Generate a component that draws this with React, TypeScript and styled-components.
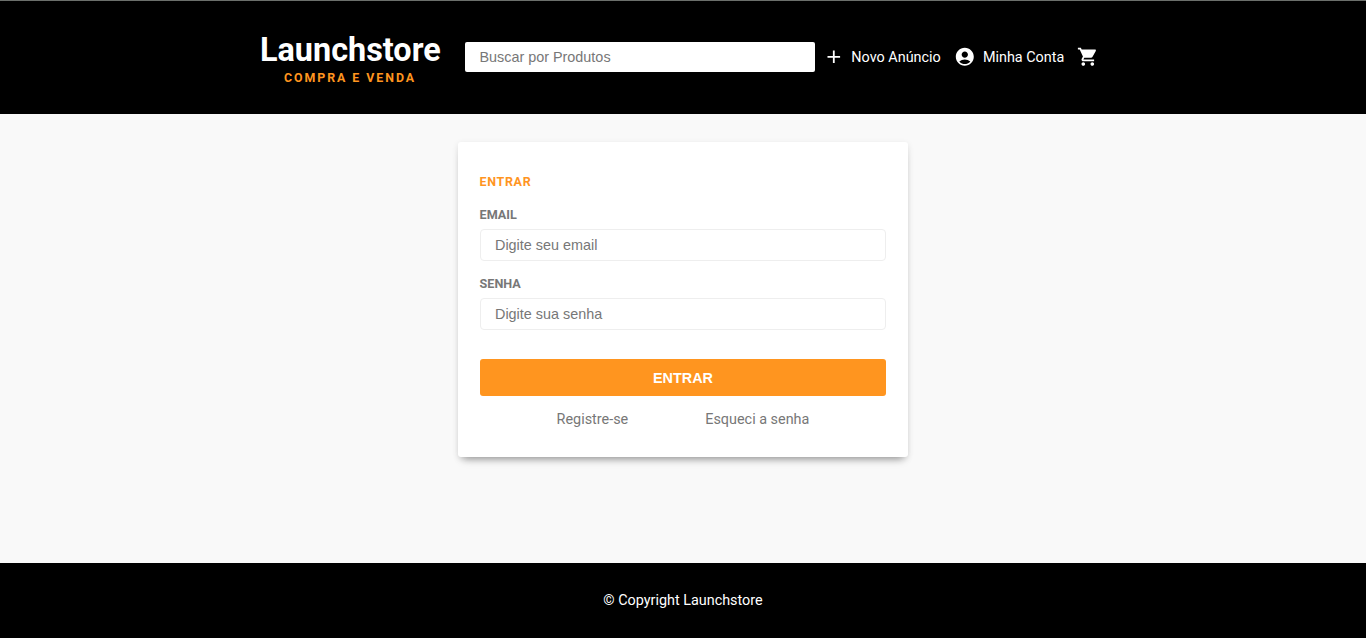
import React from 'react';
import styled, { createGlobalStyle } from 'styled-components';
import { MdAdd, MdAccountCircle, MdShoppingCart } from 'react-icons/md';

const GlobalStyle = createGlobalStyle`
  * { margin: 0; padding: 0; box-sizing: border-box; }
  body { font-family: Roboto, sans-serif; font-size: 14.4px; background: #f9f9f9; }
  a { color: inherit; text-decoration: none; }
`;

const Page = styled.div`
  min-height: 100vh;
  display: flex;
  flex-direction: column;
`;

const Header = styled.header`
  height: 114px;
  background: #000;
  box-shadow: inset 0 1px #6b6f6b;
  color: #fff;
  display: flex;
  justify-content: center;
`;

const Bar = styled.div`
  width: 846px;
  display: flex;
  align-items: center;
`;

const Logo = styled.a`
  width: 180px;
  margin-right: 25px;
  padding-top: 2px;
  text-align: center;
`;

const LogoName = styled.h1`
  font-size: 32.4px;
  line-height: 39px;
  font-weight: 700;
`;

const LogoTag = styled.span`
  display: block;
  color: #ff951f;
  font-size: 12.4px;
  line-height: 16px;
  font-weight: 700;
  letter-spacing: 1.94px;
`;

const Search = styled.input`
  width: 350px;
  height: 30px;
  border: 0;
  border-radius: 2px;
  padding: 0 14.4px;
  font: 14.4px 'Liberation Sans', sans-serif;
  &::placeholder { color: #777; }
`;

const NavLink = styled.a<{ $left: number }>`
  display: flex;
  align-items: center;
  gap: 7.2px;
  margin-left: ${(p) => p.$left}px;
  white-space: nowrap;
`;

const Main = styled.main`
  flex: 1;
  padding-top: 28px;
`;

const Card = styled.form`
  width: 450px;
  height: 315px;
  margin: 0 auto;
  padding: 32px 21.6px 0;
  background: #fff;
  border-radius: 3px;
  box-shadow: 0 7px 8px -5px rgba(0, 0, 0, 0.35), 0 2px 6px rgba(0, 0, 0, 0.11);
`;

const Title = styled.h2`
  color: #ff951f;
  font-size: 12.5px;
  line-height: 15px;
  letter-spacing: 0.65px;
  margin-bottom: 18px;
`;

const Field = styled.label`
  display: block;
  color: #777;
  font-size: 12.6px;
  line-height: 15px;
  font-weight: 700;
  margin-bottom: 15px;
`;

const Input = styled.input`
  display: block;
  width: 100%;
  height: 32px;
  margin-top: 7px;
  padding: 0 14.4px;
  border: 1px solid #eee;
  border-radius: 4px;
  font: 14.4px 'Liberation Sans', sans-serif;
  &::placeholder { color: #777; }
`;

const Submit = styled.button`
  width: 100%;
  height: 37px;
  margin-top: 14px;
  border: 0;
  border-radius: 3px;
  background: #ff951f;
  color: #fff;
  font: bold 14.4px 'Liberation Sans', sans-serif;
`;

const Links = styled.nav`
  display: flex;
  justify-content: space-evenly;
  margin-top: 15px;
  color: #777;
  line-height: 17px;
`;

const Footer = styled.footer`
  height: 75px;
  display: flex;
  align-items: center;
  justify-content: center;
  background: #000;
  color: #fff;
`;

export default function App() {
  return (
    <Page>
      <GlobalStyle />
      <Header>
        <Bar>
          <Logo href="#">
            <LogoName>Launchstore</LogoName>
            <LogoTag>COMPRA E VENDA</LogoTag>
          </Logo>
          <Search placeholder="Buscar por Produtos" />
          <NavLink href="#" $left={7.5}><MdAdd size={21.6} />Novo Anúncio</NavLink>
          <NavLink href="#" $left={13.4}><MdAccountCircle size={21.6} />Minha Conta</NavLink>
          <NavLink href="#" $left={12.6}><MdShoppingCart size={21.6} /></NavLink>
        </Bar>
      </Header>
      <Main>
        <Card>
          <Title>ENTRAR</Title>
          <Field>EMAIL<Input type="email" placeholder="Digite seu email" /></Field>
          <Field>SENHA<Input type="password" placeholder="Digite sua senha" /></Field>
          <Submit type="button">ENTRAR</Submit>
          <Links>
            <a href="#">Registre-se</a>
            <a href="#">Esqueci a senha</a>
          </Links>
        </Card>
      </Main>
      <Footer>© Copyright Launchstore</Footer>
    </Page>
  );
}
